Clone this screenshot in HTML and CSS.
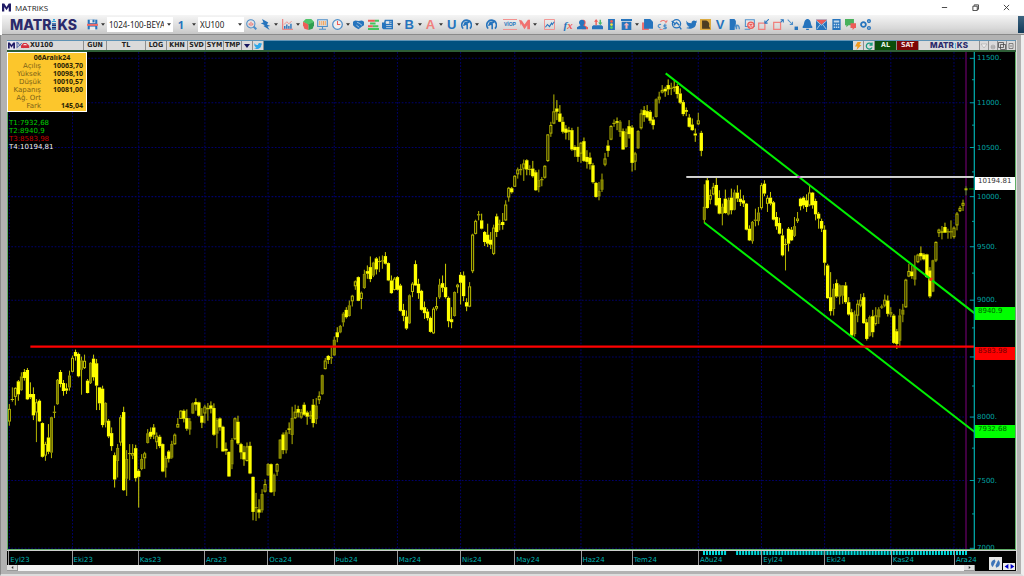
FILE: index.html
```html
<!DOCTYPE html>
<html lang="tr">
<head>
<meta charset="utf-8">
<title>MATRIKS</title>
<link rel="stylesheet" href="styles.css">
</head>
<body>
<svg class="defs" aria-hidden="true">
  <symbol id="m" viewBox="0 0 16 16"><path d="M0 15V1h4l4 6 4-6h4v14h-4V7l-4 6-4-6v8z"/></symbol>
  <symbol id="caret" viewBox="0 0 6 4"><path d="M0 0h6L3 4z"/></symbol>
  <symbol id="bird" viewBox="0 0 16 16"><path d="M0 2c2 3 4 4 8 4 0-4 4-5 6-3l2-1-1 2 1 0-1.500 2C15 12 8 16 0 13c2 0 4 0 5-2-2 0-3-1-3-2h1C1 8 0 6 1 6z"/></symbol>
  <symbol id="swirl" viewBox="0 0 16 16"><g fill="none" stroke="#2674bd" stroke-width="2.300"><path d="M3 14C-2 7 4 0 10 2c5 1 7 8 3 12M4 10c1-5 4-6 8-5M9 15V8"/></g><path d="M5 4h5v5H5z" fill="#2674bd"/></symbol>
</svg>

<header class="titlebar">
  <svg class="app-mark"><use href="#m"/></svg>
  <h1 class="app-name">MATRIKS</h1>
  <div class="window-buttons">
    <button aria-label="Simge durumuna küçült"><svg viewBox="0 0 8 8"><path d="M1 4h6"/></svg></button>
    <button aria-label="Geri yükle"><svg viewBox="0 0 8 8"><path d="M1 2.500h5v5H1zM2.500 2V1H7.500v5H6"/></svg></button>
    <button aria-label="Kapat"><svg viewBox="0 0 8 8"><path d="M1 1l6 6M7 1L1 7"/></svg></button>
  </div>
</header>

<nav class="toolbar">
  <div class="brand"><span>MATR</span><svg viewBox="0 0 4 11"><path d="M0 4h4v7H0z" fill="#2b2a6b"/><path d="M1 0h2v1.500H1zM0 2h4v1H0z" fill="#35a6dc"/><path d="M0 5h4M0 7.500h4M0 10h4" stroke="#6fbfe8"/></svg><span>KS</span></div>
  <button class="save" aria-label="Kaydet"><svg viewBox="0 0 16 16"><path d="M1 1h14v14H1z" fill="#2674bd"/><path d="M4 1h8v5H4z" fill="#ececec"/><path d="M8 1h3v4H8z" fill="#2674bd"/><path d="M0 7h16v3H0z" fill="#f26b66"/><path d="M4 11h8v5H4z" fill="#ececec"/></svg></button>
  <button class="drop" aria-label="Kaydet menüsü"><svg><use href="#caret"/></svg></button>
  <div class="combo page-combo"><select aria-label="Sayfa"><option>1024-100-BEYA</option></select><svg><use href="#caret"/></svg></div>
  <button class="one">1</button>
  <button class="drop" aria-label="Pencere menüsü"><svg><use href="#caret"/></svg></button>
  <div class="combo symbol-combo"><select aria-label="Sembol"><option>XU100</option></select><svg><use href="#caret"/></svg></div>

  <div class="tools">
    <button class="tool" aria-label="Ara"><svg viewBox="0 0 16 16"><g fill="none" stroke="#4d8ec9" stroke-width="1.500"><circle cx="7" cy="7" r="6"/><path d="M11 11l4 4" stroke-width="3"/></g><path d="M4 9V6h1.500v3zM6.500 10V4H8v6zM9 9V6h1.500v3z" fill="#f0716f"/></svg></button>
    <button class="tool" aria-label="Emir"><svg viewBox="0 0 16 16"><path d="M3 0l9 5-2 3 5 2-4 1 3 5-9-6 2-1-6-3 4-1z" fill="#2674bd"/></svg></button>
    <button class="drop" aria-label="Emir menüsü"><svg><use href="#caret"/></svg></button>
    <button class="tool" aria-label="Grafik"><svg viewBox="0 0 16 16"><path d="M1 0v15h15" stroke="#f0716f" stroke-width="1.500" fill="none"/><path d="M3 14v-4h2v4zM6 14V8h2v6zM9 14v-4h2v4zM12 14V7h2v7z" fill="#2674bd"/><path d="M3 8l4-4 3 3 4-4" stroke="#f0716f" fill="none"/></svg></button>
    <button class="drop" aria-label="Grafik menüsü"><svg><use href="#caret"/></svg></button>
    <button class="tool" aria-label="Dağılım"><svg viewBox="0 0 16 16"><path d="M0 4l4-4h8l4 4-8 5z" fill="#4fc46a"/><path d="M0 4l8 4v8l-6-2-2-5z" fill="#ee5b57"/><path d="M16 4L8 8v8l6-2 2-5z" fill="#2f9e50"/></svg></button>
    <button class="tool" aria-label="Ekran"><svg viewBox="0 0 16 16"><path d="M1 1h14v10H1zM8 11v3M3 15h10" fill="none" stroke="#4d8ec9" stroke-width="1.600"/><path d="M4 3v6M7 3v6M9.500 3v6M12 3v6" stroke="#f3a45a" stroke-width="1.500"/></svg></button>
    <button class="tool" aria-label="Saat"><svg viewBox="0 0 16 16"><circle cx="8" cy="8" r="7" fill="#eee" stroke="#4d8ec9" stroke-width="1.800"/><path d="M8 3v5h4" stroke="#ee5b57" stroke-width="1.500" fill="none"/></svg></button>
    <button class="drop" aria-label="Saat menüsü"><svg><use href="#caret"/></svg></button>
    <button class="tool" aria-label="Anlaşma"><svg viewBox="0 0 16 16"><path d="M0 4l3-2 5 1 5-1 3 2v5l-3 2-5 4-5-3-3-3z" fill="#2674bd"/><path d="M6 5l3 1 4 3M5 9l4 3" stroke="#dce8f3" fill="none"/></svg></button>
    <button class="tool" aria-label="Derinlik"><svg viewBox="0 0 16 16"><path d="M0 1h10v3H0zM0 9h7v3H0z" fill="#ee5b57"/><path d="M10 1h6v3h-6zM3 5h8v3H3zM7 9h8v3H7zM0 13h16v3H0z" fill="#45c45c"/></svg></button>
    <button class="tool" aria-label="Haberler"><svg viewBox="0 0 16 16"><path d="M4 1h12v14H2l-2-2V5h3z" fill="#2674bd"/><path d="M6 3.500h4v3H6zM11 4h3M11 6.500h3M6 9.500h8M6 12.500h8" fill="#ececec" stroke="#ececec"/></svg></button>
    <button class="drop" aria-label="Haber menüsü"><svg><use href="#caret"/></svg></button>
    <button class="tool letter blue">B</button>
    <button class="drop" aria-label="B menüsü"><svg><use href="#caret"/></svg></button>
    <button class="tool letter red">A</button>
    <button class="drop" aria-label="A menüsü"><svg><use href="#caret"/></svg></button>
    <button class="tool letter blue">U</button>
    <button class="tool" aria-label="Takas"><svg><use href="#swirl"/></svg></button>
    <button class="drop" aria-label="Takas menüsü"><svg><use href="#caret"/></svg></button>
    <i class="sep"></i>
    <button class="tool" aria-label="Analiz"><svg><use href="#swirl"/></svg></button>
    <i class="sep"></i>
    <button class="tool viop">VİOP</button>
    <button class="tool" aria-label="Matriks"><svg viewBox="0 0 16 16"><path d="M0 1l4 1 4 6 5-7h3v14h-4V9l-4 6-5-8v4z" fill="#f0716f"/></svg></button>
    <button class="drop" aria-label="Matriks menüsü"><svg><use href="#caret"/></svg></button>
    <i class="sep"></i>
    <button class="tool" aria-label="Çizgi grafik"><svg viewBox="0 0 16 16"><path d="M.700.700h14.600v14.600H.700z" fill="none" stroke="#f2918f" stroke-width="1.400"/><path d="M2 12l3-4 3 3 3-5 1 2 3-4" fill="none" stroke="#2674bd" stroke-width="1.500"/></svg></button>
    <i class="sep"></i>
    <button class="tool fx"><b>f</b>x</button>
    <button class="tool" aria-label="Kullanıcılar"><svg viewBox="0 0 16 16"><path d="M8 1c6-1 5 7 3 8l5 3v3H7z" fill="#ee5b57"/><path d="M7 1c5 0 5 6 2 8l4 3v3H0v-3l5-3C2 7 2 1 7 1z" fill="#2674bd"/></svg></button>
    <button class="tool" aria-label="Gelen"><svg viewBox="0 0 16 16"><path d="M0 11l2-2h12l2 2v4H0z" fill="#2674bd"/><path d="M5 9V4H3l3-4 3 4H7v5z" fill="#ee5b57"/><path d="M11 1v4H9l3 4 3-4h-2V1z" fill="#45b868"/></svg></button>
    <button class="tool" aria-label="Sinyal"><svg viewBox="0 0 16 16"><path d="M3 0h10v16H3z" fill="#2674bd"/><circle cx="8" cy="3.500" r="2" fill="#ee5b57"/><circle cx="8" cy="8" r="2" fill="#f5dc3c"/><circle cx="8" cy="12.500" r="2" fill="#4fd05e"/></svg></button>
    <button class="tool" aria-label="Yükle"><svg viewBox="0 0 16 16"><path d="M0 0h16v3H0zM1 4h14v12H1z" fill="#2674bd"/><path d="M6.500 14V9H4l4-4 4 4H9.500v5z" fill="#f5b3b8"/></svg></button>
    <button class="drop" aria-label="Yükle menüsü"><svg><use href="#caret"/></svg></button>
    <button class="tool" aria-label="Kopyala"><svg viewBox="0 0 16 16"><path d="M0 5h10v11H0z" fill="#ee6f6c"/><path d="M3 0h9l4 4v10H3z" fill="#2674bd"/></svg></button>
    <button class="tool" aria-label="Döviz"><svg viewBox="0 0 16 16"><g fill="none" stroke-width="1.600"><path d="M6 8C1 7 0 12 5 13" stroke="#4d8ec9"/><path d="M5 4c3-3 7-2 8 1l2-3M4 15c2 1 3 1 4 0" stroke="#ee7a76"/><path d="M14 9c-5-1-5 2-2 2.500s2 3.500-3 2.500M11.500 7v8" stroke="#4d8ec9"/></g></svg></button>
    <button class="tool" aria-label="İncele"><svg viewBox="0 0 16 16"><g fill="none" stroke="#2674bd"><circle cx="8" cy="7" r="6" stroke-width="1.800"/><path d="M12 11l3 4M1 3l5 4M4 9l4-4 4 4" stroke-width="2"/></g></svg></button>
    <button class="tool" aria-label="Twitter"><svg fill="#2674bd"><use href="#bird"/></svg></button>
    <button class="tool" aria-label="Portre"><svg viewBox="0 0 16 16"><path d="M0 0h16v16H0z" fill="#dba93f"/><path d="M3 2h6c5 2 5 6 4 8l2 4H3z" fill="#4c3d22"/></svg></button>
    <button class="tool letter blue">V</button>
    <button class="tool" aria-label="Şirket"><svg viewBox="0 0 16 16"><path d="M1 0h7l2 3v4l-2 9H1z" fill="#2674bd"/><path d="M8 15c0-8 7-8 7 0M11 15v-5" fill="none" stroke="#4d8ec9" stroke-width="2"/></svg></button>
    <button class="tool" aria-label="Ekran kapat"><svg viewBox="0 0 16 16"><path d="M2 1h13v10H2zM1 15h8" fill="none" stroke="#4d8ec9" stroke-width="1.500"/><circle cx="10" cy="9" r="4.500" fill="#f6c9c9" stroke="#ee5b57" stroke-width="1.800"/><path d="M8 7l4 4M12 7l-4 4" stroke="#ee5b57" stroke-width="1.500"/></svg></button>
    <button class="tool" aria-label="Küçült"><svg viewBox="0 0 16 16"><path d="M1 6h9v9H1z" fill="none" stroke="#f0807d" stroke-width="1.800"/><path d="M16 0l-5 5M10 2v4h4" fill="none" stroke="#2674bd" stroke-width="1.500"/></svg></button>
    <button class="tool" aria-label="Büyüt"><svg viewBox="0 0 16 16"><path d="M1 5h10v10H1z" fill="none" stroke="#f0807d" stroke-width="1.800"/><path d="M11 5l4-4M11 1h4v4" fill="none" stroke="#2674bd" stroke-width="1.500"/></svg></button>
    <button class="tool" aria-label="Taşı"><svg viewBox="0 0 16 16"><path d="M1 1l7 7M8 4v4H4" fill="none" stroke="#4d8ec9" stroke-width="1.500"/><path d="M11 11h5v5h-5z" fill="#2674bd"/></svg></button>
    <button class="tool" aria-label="Alarm"><svg viewBox="0 0 16 16"><path d="M7 0h2c5 2 3 8 6 11v2H1v-2C4 8 2 2 7 0zM6 14h4v2H6z" fill="#2674bd"/></svg></button>
    <button class="tool" aria-label="Mesaj"><svg viewBox="0 0 16 16"><path d="M0 1h16v15H0z" fill="#2674bd"/><path d="M0 1h16L8 8z" fill="#ee5b57"/><path d="M0 2l8 7 8-7M1 15l5-7M15 15l-5-7" fill="none" stroke="#dfe7ee"/></svg></button>
    <button class="tool" aria-label="Hesap makinesi"><svg viewBox="0 0 16 16"><path d="M2 0h12v16H2z" fill="#2674bd"/><path d="M4 2h8v3H4zM4 7h2v2H4zM7 7h2v2H7zM10 7h2v2h-2zM4 11h2v2H4zM7 11h2v2H7zM10 11h2v2h-2z" fill="#c3d9ec"/></svg></button>
    <button class="tool" aria-label="Sohbet"><svg viewBox="0 0 16 16"><path d="M0 0h13v9H5l-3 3V9H0z" fill="#48b15c"/><path d="M8 6h8v7h-2l-3 3v-3H8z" fill="#ee5b57"/></svg></button>
    <button class="tool" aria-label="Ayarlar"><svg viewBox="0 0 16 16"><g fill="none" stroke="#2674bd" stroke-width="2"><circle cx="5" cy="8" r="3.500" stroke-width="2.600"/><circle cx="13" cy="3" r="2"/><circle cx="13" cy="13" r="2"/></g></svg></button>
  </div>
  <span class="dock" aria-hidden="true"></span>
</nav>

<main class="frame">
  <section class="chart-window">
    <div class="chart-bar">
      <svg class="bar-mark"><use href="#m"/></svg>
      <svg class="bar-tools" viewBox="0 0 39 24"><path d="M1 4h5l4 8 6-7M3 4v14M2 18l10-8 8 8" fill="none" stroke="#4a5fa8" stroke-width="2.500"/><path d="M14 13l6-8h9l8 8v6H14z" fill="#d6303f"/><path d="M20 11l2-3h6l3 3z" fill="#f2dada"/></svg>
      <span class="cell sym">XU100</span>
      <button class="cell gun">GUN</button>
      <button class="cell tl">TL</button>
      <button class="cell w21">LOG</button>
      <button class="cell w21">KHN</button>
      <button class="cell w17">SVD</button>
      <button class="cell w17">SYM</button>
      <button class="cell w17">TMP</button>
      <button class="cell w10" aria-label="Menü"><svg class="menu-caret"><use href="#caret"/></svg></button>
      <button class="cell w10" aria-label="Paylaş"><svg class="share" fill="#2ca7e8"><use href="#bird"/></svg></button>
      <span class="grow"></span>
      <button class="cell w10" aria-label="Hızlı emir"><svg class="share" viewBox="0 0 16 16"><path d="M7 0h7l-3 6h4L5 16l2-7H2z" fill="#f09a1e"/></svg></button>
      <button class="cell w10" aria-label="Yenile"><svg class="share" viewBox="0 0 16 16"><path d="M13 4a6 6 0 1 0 1 7M9 6h5V1" fill="none" stroke="#1c9c80" stroke-width="2.600"/></svg></button>
      <button class="cell buy">AL</button>
      <button class="cell sell">SAT</button>
      <span class="cell bar-brand"><span>MATR</span><i></i><span>KS</span></span>
      <button class="cell w9" aria-label="Aşağı"><svg class="share" viewBox="0 0 16 16"><path d="M2 4h12l-6 8z" fill="#eee" stroke="#999"/></svg></button>
      <button class="cell w9" aria-label="Küçült"><svg class="share" viewBox="0 0 16 16"><circle cx="8" cy="10" r="4" fill="#ccc" stroke="#888"/><path d="M5 10h6" stroke="#666"/></svg></button>
      <button class="cell w9" aria-label="Döşe"><svg class="share" viewBox="0 0 16 16"><path d="M1 1h10v10H1zM5 5h10v10H5z" fill="none" stroke="#444" stroke-width="1.500"/></svg></button>
      <button class="cell w9" aria-label="Kapat"><svg class="share" viewBox="0 0 16 16"><path d="M4 3h8v10H4zM6 8h4" fill="none" stroke="#666" stroke-width="1.500"/></svg></button>
    </div>

    <div class="chart-body">
      <div class="plot">
        <svg id="plot" viewBox="24 156 2898 1488" preserveAspectRatio="none" role="img" aria-label="XU100 günlük mum grafiği"></svg>
        <div class="quote">
          <h2>06Aralık24</h2>
          <dl>
            <dt>Açılış</dt><dd>10063,70</dd>
            <dt>Yüksek</dt><dd>10098,10</dd>
            <dt>Düşük</dt><dd>10010,57</dd>
            <dt>Kapanış</dt><dd>10081,00</dd>
            <dt>Ağ. Ort</dt><dd></dd>
            <dt>Fark</dt><dd>145,04</dd>
          </dl>
        </div>
        <ul class="trends">
          <li class="up">T1:7932,68</li>
          <li class="up">T2:8940,9</li>
          <li class="down">T3:8583,98</li>
          <li>T4:10194,81</li>
        </ul>
      </div>
      <div class="prices" id="prices"></div>
    </div>

    <div class="date-row">
      <div class="dates">
        <svg id="events" viewBox="24 0 2898 12" preserveAspectRatio="none" aria-hidden="true"></svg>
        <div id="dates"></div>
      </div>
      <div class="corner">
        <button class="refresh" aria-label="Yenile"><svg viewBox="0 0 16 16"><path d="M7 2c-6 1-7 8-3 11l4-8zM9 14c6-1 7-8 3-11L8 11z" fill="#3f74b8"/></svg></button>
        <button class="nav" aria-label="Geri"><svg viewBox="0 0 6 8"><path d="M6 0v8L0 4z"/></svg></button>
        <button class="nav" aria-label="İleri"><svg viewBox="0 0 6 8"><path d="M0 0v8l6-4z"/></svg></button>
      </div>
      <div class="scroll">
        <button aria-label="Sola kaydır"><svg viewBox="0 0 6 8"><path d="M5 0v8L0 4z"/></svg></button>
        <span class="grow"></span>
        <button aria-label="Sağa kaydır"><svg viewBox="0 0 6 8"><path d="M1 0v8l5-4z"/></svg></button>
      </div>
    </div>
  </section>
</main>
<script src="chart.js"></script>
</body>
</html>
```

FILE: styles.css
```css
* { box-sizing: border-box; }
html, body { height: 100%; margin: 0; }
body {
  display: flex; flex-direction: column; overflow: hidden;
  background: #fff; color: #222;
  font: 7px/8px "DejaVu Sans", Verdana, sans-serif;
}
h1, h2, dl, dd, dt, ul { margin: 0; padding: 0; }
ul { list-style: none; }
button, select { margin: 0; padding: 0; border: 0; background: none; font: inherit; color: inherit; border-radius: 0; }
svg { display: block; }
.defs { width: 0; height: 0; position: absolute; }
.grow { flex: 1; }

.titlebar { display: flex; align-items: center; height: 15px; flex: none; padding-left: 2px; gap: 4px; }
.app-mark { width: 9px; height: 9px; fill: #201c66; }
.app-name { font: 400 8px/14px "Open Sans", sans-serif; color: #222; }
.window-buttons { margin-left: auto; display: flex; padding-right: 2px; }
.window-buttons button { width: 31px; height: 15px; display: grid; place-items: center; }
.window-buttons svg { width: 7px; height: 7px; fill: none; stroke: #333; }

.toolbar {
  display: flex; align-items: center; height: 20px; flex: none;
  margin-left: 2px; padding-left: 8px; position: relative;
  background: linear-gradient(#f5f5f5, #d8d8d8 70%, #c6c6c6);
  border-bottom: 1px solid #8a8a8a;
}
.brand { display: flex; align-items: center; width: 77px; color: #2b2a6b; font: 800 14px/18px Inter, sans-serif; }
.brand svg { width: 4px; height: 11px; margin: 0 1px; }
.save { width: 11px; }
.tool svg, .save svg { width: 11px; height: 11px; }
.drop { width: 9px; display: grid; place-items: center; }
.drop svg { width: 4px; height: 3px; fill: #333; }
.combo { display: flex; align-items: center; position: relative; height: 15px; background: #fff; }
.combo select { appearance: none; width: 100%; height: 15px; padding: 0 9px 0 2px; font: 8px/15px "Noto Sans", sans-serif; color: #222; }
.combo svg { position: absolute; right: 2px; width: 4px; height: 3px; fill: #333; }
.page-combo { width: 66px; }
.symbol-combo { width: 46px; }
.one { width: 16px; color: #2674bd; font: 700 11px/15px "Open Sans", sans-serif; }
.tools { display: flex; align-items: center; flex: 0 0 62%; }
.tool { flex: 15 1 0; min-width: 0; height: 16px; display: flex; align-items: center; justify-content: center; }
.tools .drop { flex: 7 1 0; min-width: 0; }
.sep { flex: 4 1 0; }
.letter { font: 700 13px/16px "Liberation Sans", sans-serif; }
.blue { color: #2674bd; }
.red { color: #f0807d; }
.viop { font: 700 5px/9px "Liberation Sans", sans-serif; color: #2674bd; height: 11px; border: solid #f2918f; border-width: 1px 0; }
.fx { font: italic 700 11px/16px "Liberation Serif", serif; color: #ee5b57; }
.fx b { color: #2674bd; }
.dock { position: absolute; right: 0; top: 1px; width: 6px; height: 17px; background: linear-gradient(#3e6480, #123b5a); }

.frame {
  flex: 1; min-height: 0; display: flex;
  padding: 5px 4px 3px 6px; background: #b2b2b2;
  border-left: 1px solid #8a8a8a; border-right: 3px solid #eee; border-bottom: 2px solid #ddd;
}
.chart-window {
  flex: 1; min-width: 0; display: flex; flex-direction: column; background: #000;
  border-right: 1px solid #ddd;
}
.chart-bar {
  display: flex; height: 12px; flex: none; background: #00507f;
  border-top: 1px solid #5f93b5; border-bottom: 2px solid #2d5e36;
}
.bar-mark { width: 9px; height: 9px; padding: 1px; background: #e6e6ee; fill: #201c66; }
.bar-tools { width: 14px; height: 9px; background: #d9d9d9; }
.cell {
  height: 9px; display: flex; align-items: center; justify-content: center;
  background: #dadada; border-right: 1px solid #8e8e8e; color: #222;
  font: 700 7px/9px "DejaVu Sans Condensed", "DejaVu Sans", sans-serif;
}
.sym { width: 54px; justify-content: flex-start; }
.gun { width: 23px; }
.tl { width: 39px; }
.w21 { width: 21px; }
.w17 { width: 18px; }
.w10 { width: 11px; }
.w9 { width: 9px; }
.menu-caret { width: 6px; height: 4px; fill: #16165e; }
.share { width: 8px; height: 8px; }
.buy { width: 22px; background: #0b4d0b; color: #e8f4e8; }
.sell { width: 22px; background: #7d0606; color: #f6e2e2; }
.bar-brand { width: 61px; color: #2b2a6b; font: 800 8px/9px Inter, sans-serif; }
.bar-brand i { width: 1px; height: 6px; margin: 0 1px; background: #58b4e4; }

.chart-body {
  flex: 1; min-height: 0; display: flex;
  border: solid #5fae66; border-width: 0 1px 1px;
}
.plot { flex: 1; min-width: 0; position: relative; }
.plot > svg { width: 100%; height: 100%; }
.quote {
  position: absolute; left: -1px; top: 0; width: 80px; padding: 1px 3px 1px 4px;
  background: #fcc62c; border: 1px solid #fff; font: 7px/8px "DejaVu Sans", sans-serif;
}
.quote h2 { font: 700 7px/8px "Noto Sans", sans-serif; padding-left: 9px; text-align: center; color: #2a2205; }
.quote dl { display: grid; grid-template-columns: 29px 1fr; grid-auto-rows: 8px; }
.quote dt { justify-self: end; color: #7c6318; }
.quote dd { text-align: right; font: 700 7px/8px "Noto Sans", sans-serif; color: #2a2205; }
.trends { position: absolute; left: 1px; top: 67px; color: #f0f0f0; }
.up { color: #00d000; }
.down { color: #c80000; }

.prices { width: 40px; position: relative; overflow: hidden; }
.price { position: absolute; left: 2px; color: #00a4a4; transform: translateY(-50%); }
.tag { position: absolute; left: 0; right: 0; height: 13px; padding-left: 3px; line-height: 9px; }
.tag-white { background: #fff; color: #333; }
.tag-green { background: #00ff00; color: #005c00; }
.tag-red { background: #ff0000; color: #6b0000; }

.date-row {
  flex: none; display: grid; grid-template: 14px 6px / 1fr 41px;
  border-top: 1px solid #cfcfcf;
}
.dates { position: relative; }
.dates > svg { width: 100%; height: 4px; }
.date { position: absolute; top: 0; bottom: 0; padding-left: 1px; padding-top: 5px; color: #00b4b4; border-left: 1px solid #999; white-space: nowrap; }
.corner { grid-row: 1 / 3; grid-column: 2; display: flex; align-items: flex-end; padding: 0 1px 1px 14px; }
.refresh { width: 13px; height: 13px; display: grid; place-items: center; background: #e6e6e6; margin-right: 1px; }
.refresh svg { width: 11px; height: 11px; }
.nav { width: 6px; height: 7px; display: grid; place-items: center; background: #eee; }
.nav svg { width: 5px; height: 5px; fill: #0000c8; }
.scroll { display: flex; background: #f4f4f4; }
.scroll button { width: 11px; height: 6px; display: grid; place-items: center; background: #e0e0e0; border: solid #999; border-width: 0 1px 1px 0; }
.scroll svg { width: 3px; height: 3px; fill: #333; }
```

FILE: chart.js
```js
// Candle rows: high, body top, body bottom, low, kind (f filled, o shaded, h hollow, d doji).
// Vertical values are in plot units, counted from the block's base.
const blocks = [
  { base: 990, rows: `220 235 272 285 h;170 205 208 213 d;170 172 198 224 h;148 152 191 210 f;125 138 178 180 o;115 124 142 150 f;112 118 206 208 f;155 190 200 205 f;170 190 254 268 f;205 215 245 334 h;206 210 272 274 f;275 277 378 380 f;333 340 374 390 h;280 320 363 370 f;258 260 365 382 o;225 243 246 262 d;145 148 220 222 o;118 124 160 170 f;148 157 181 195 f;158 173 180 190 f;120 135 170 180 o;75 82 123 125 h;57 64 77 90 f;66 70 137 140 f;78 90 117 192 o;72 91 112 115 h;145 150 187 188 f;95 97 157 160 o;72 84 140 150 f;85 98 165 238 f;170 170 218 238 f;165 174 283 290 f;215 217 275 290 o;265 270 317 322 f;290 307 346 360 f;365 373 446 470 f;340 352 390 440 o;253 260 335 345 h;228 244 478 480 f;358 385 443 495 o;340 367 370 448 d;340 367 374 385 h;342 352 442 452 f;415 420 438 530 f;370 385 414 418 o;363 368 382 414 h;295 308 336 338 o;290 303 318 325 f;280 290 312 325 f;305 315 334 355 h;312 318 346 352 f;338 340 422 424 f;375 382 410 440 o;358 362 384 395 f;330 340 380 384 o;308 312 340 342 h;262 280 290 290 h;238 240 264 265 h;236 240 264 275 f;236 262 294 300 f;262 272 296 312 o;215 218 248 250 o;203 214 222 240 f;213 215 255 258 f;232 255 276 292 f;222 228 248 278 h;217 232 236 270 d;212 224 234 248 f;218 232 312 315 f;262 268 308 352 o;260 263 290 300 f;285 288 362 363 f;335 354 360 372 f;362 363 437 438 f;322 328 400 415 o;260 263 325 328 h;255 273 338 342 f;336 340 365 385 f;345 364 386 405 f;335 347 390 392 h;333 345 428 430 f;437 438 543 568 f;486 529 532 570 d;505 535 545 562 f;475 490 538 545 o;445 460 482 485 h` },
  { base: 690, rows: `697 700 733 735 o;698 700 784 786 f;728 732 782 795 o;697 700 722 735 h;625 627 683 684 o;605 611 658 670 f;598 605 658 668 o;575 593 597 610 f;528 562 612 640 o;522 543 562 565 h;525 535 546 560 f;535 545 560 564 h;515 522 552 555 f;540 545 558 582 f;540 554 557 565 d;505 522 577 590 f;502 525 565 580 o;482 496 508 520 h;432 434 490 492 o;382 390 415 416 h;373 376 388 400 f;350 380 383 400 d;318 328 374 376 o;290 305 320 335 f;283 287 305 308 o;245 250 275 288 o;230 238 260 264 f;210 225 256 258 o;193 196 212 228 h;150 153 167 178 h;138 140 211 212 f;183 187 205 236 h;118 131 172 175 o;105 122 130 145 f;78 110 146 155 f;94 97 135 140 o;80 84 117 132 f;78 92 95 125 d;75 90 93 115 d;65 77 100 102 f;96 98 150 152 f;135 150 188 190 f;140 145 178 180 h;137 140 178 180 f;160 165 241 243 f;220 238 256 272 f;240 258 294 298 f;192 195 278 280 o;155 160 184 200 h;90 101 165 166 f;145 160 188 205 f;178 181 238 240 f;213 230 248 265 f;235 243 263 270 f;258 262 304 306 f;230 235 308 310 h;200 227 234 240 h;145 163 200 205 o;135 158 172 185 f;100 170 200 204 f;198 202 272 290 f;230 266 275 293 f;183 185 256 258 o;160 163 170 188 h;125 133 157 222 f;123 135 197 212 f;203 215 228 242 f;155 168 228 230 h;10 13 122 128 h;-32 -28 10 12 h;-58 -48 -45 -30 d` },
  { base: 180, rows: `460 480 505 507 f;512 515 545 557 f;490 523 550 560 f;515 538 553 566 f;493 502 580 584 h;460 468 515 530 f;478 490 493 510 d;458 485 494 508 f;420 433 480 482 h;380 383 411 424 h;380 384 396 400 f;345 347 379 380 h;322 328 342 355 h;312 327 330 345 d;298 310 325 362 h;297 300 328 345 f;315 326 329 345 d;302 325 348 352 f;330 336 390 392 f;328 360 380 396 o;350 357 360 378 d;315 317 352 355 h;222 223 302 305 h;185 195 220 230 h;103 154 190 192 h;120 145 155 180 f;135 160 185 186 f;170 185 215 220 f;195 205 218 238 f;200 210 215 240 f;203 210 268 272 f;255 260 270 290 f;200 260 290 305 f;245 248 280 308 h;232 243 302 305 f;270 290 305 325 f;277 292 312 328 f;308 315 366 370 f;365 368 410 412 f;365 392 408 420 o;340 358 388 395 o;278 295 313 318 h;240 256 272 290 f;195 198 238 240 h;178 188 191 200 d;172 183 188 210 f;180 185 215 230 o;205 213 268 269 f;205 215 260 262 o;180 198 222 235 f;195 202 308 334 f;275 280 304 330 h;210 213 264 266 o;148 160 204 208 h;138 150 165 185 f;135 153 172 175 f;150 155 182 190 f;170 178 195 208 f;115 118 170 172 o;95 110 118 130 h;75 90 97 100 h;80 86 94 110 f;58 75 88 105 f;68 83 86 105 d;60 80 82 95 f;72 78 102 115 f;85 100 128 132 f;120 126 162 168 f;142 150 155 168 f;162 172 200 202 f;175 193 210 212 f;205 220 226 245 f;158 181 192 195 h;212 218 272 288 f` },
  { base: 480, rows: `72 140 178 188 o;52 60 143 145 f;88 105 118 132 h;68 80 102 105 h;52 74 135 138 f;90 113 160 162 f;130 140 160 195 o;88 115 158 160 f;112 120 162 165 o;85 112 150 162 f;88 97 148 150 o;75 97 115 125 f;88 115 125 137 f;105 120 130 140 f;128 130 208 210 f;195 205 240 242 f;182 185 242 250 o;145 178 181 198 d;140 157 182 195 o;68 75 143 148 h;60 70 100 108 f;105 113 130 155 h;95 112 130 135 f;122 126 178 180 f;155 170 198 208 f;172 188 220 222 f;205 225 285 288 f;235 251 254 330 d;200 205 250 273 f;200 208 240 242 f;170 198 226 230 o;155 175 182 188 h;112 115 138 150 f;108 112 135 145 f;102 120 140 155 f;75 97 135 138 h;95 97 135 145 f;115 122 162 180 f;155 160 175 205 f;175 182 205 215 f;195 208 307 345 f;310 315 413 415 f;335 410 452 465 f;370 385 445 465 o;357 368 408 412 f;372 375 408 432 o;375 375 405 430 o;365 375 425 430 f;410 425 462 465 f;445 455 525 530 f;450 462 520 528 o;418 430 465 485 h;400 418 435 440 h;398 410 488 490 f;475 485 535 540 f;465 470 525 528 o;448 467 515 530 f;440 465 490 495 h;440 447 470 490 o;432 438 441 445 d;402 418 435 440 h;405 420 460 468 f;440 455 462 470 o;460 465 547 550 f;505 512 550 565 f;445 465 540 560 o;430 448 462 485 o;355 358 440 442 h;310 332 348 350 h;315 333 347 355 f;285 320 357 375 o;280 283 305 308 h;258 278 288 300 f;278 282 297 300 f;280 282 350 352 f;320 330 408 413 f;298 300 393 395 o;243 245 300 305 h;205 208 218 230 h;197 213 217 237 h;187 200 217 218 f;205 213 216 235 d;180 213 216 235 d;198 202 230 235 h;155 160 195 210 h;137 143 152 155 h;118 128 136 152 h` },
];

const LEFT = 24, TOP = 156, WIDTH = 2898, HEIGHT = 1488;
const FIRST = 28, STEP = 9.016;
const months = [
  ["Eyl23", 0], ["Eki23", 21], ["Kas23", 43], ["Ara23", 65], ["Oca24", 86], ["Þub24", 108],
  ["Mar24", 129], ["Nis24", 150], ["May24", 168], ["Haz24", 190], ["Tem24", 207], ["Aðu24", 229],
  ["Eyl24", 250], ["Eki24", 271], ["Kas24", 293], ["Ara24", 314],
];
const levels = [
  ["11500.", 175], ["11000.", 308], ["10500.", 442], ["10000.", 589], ["9500.", 739],
  ["9000.", 899], ["8500.", 1069], ["8000.", 1249], ["7500.", 1439], ["7000.", 1642],
];
const minorTicks = [239, 375, 515, 663, 818, 982, 1156, 1342, 1539];
const tags = [["10194.81", 530, "white"], ["8940.9", 918, "green"], ["8583.98", 1039, "red"], ["7932.68", 1272, "green"]];

const x = i => FIRST + i * STEP;
const rect = (cx, y, w, h, fill) => `<rect x="${cx - w / 2}" y="${y}" width="${w}" height="${h}" fill="${fill}"/>`;
const line = (x1, y1, x2, y2, stroke, width, extra = "") =>
  `<line x1="${x1}" y1="${y1}" x2="${x2}" y2="${y2}" stroke="${stroke}" stroke-width="${width}" ${extra}/>`;

let out = "";
for (const [, y] of levels) out += line(LEFT, y, 2922, y, "#00006c", 3, 'stroke-dasharray="5 5"');
for (const [, i] of months) out += line(x(i), TOP, x(i), 1644, "#00006c", 3, 'stroke-dasharray="5 5"');
out += line(2895, TOP, 2895, 1644, "#400040", 6);

let index = 0;
for (const { base, rows } of blocks) {
  for (const row of rows.split(";")) {
    const [high, top, bottom, low, kind] = row.split(" ").map((v, n) => (n < 4 ? base + Number(v) : v));
    const cx = x(index++);
    const body = Math.max(bottom - top, 3);
    const wick = kind === "f" ? "#d0d000" : "#b4b400";
    out += rect(cx, high, 3, top - high, wick) + rect(cx, bottom, 3, low - bottom, wick);
    if (kind === "f") out += rect(cx, top, 10, body, "#ffff00");
    else if (kind === "d") out += rect(cx, top, 10, body, "#d0d000");
    else out += `<rect x="${cx - 3}" y="${top + 1}" width="6" height="${Math.max(body - 2, 1)}" fill="${kind === "o" ? "#707000" : "#000"}" stroke="${kind === "o" ? "#989800" : "#c0c000"}" stroke-width="3"/>`;
  }
}
out += rect(2895, 558, 3, 27, "#3c8c1e") + rect(2895, 564, 9, 6, "#b4b400") + line(2904, 566, 2922, 566, "#008c00", 3);
out += line(1995, 220, 2923, 940, "#00f000", 6) + line(2111, 667, 2923, 1295, "#00f000", 6);
out += line(91, 1038, 2923, 1038, "#ff0000", 7);
out += line(2057, 530, 2923, 530, "#b8b8b8", 6) + line(2057, 530, 2923, 530, "#fff", 2);
out += rect(2790, 832, 9, 9, "#ff3010") + rect(2394, 527, 9, 6, "#d040d0");
for (const [, y] of levels) out += line(2907, y, 2922, y, "#00a0a0", 3);
for (const y of minorTicks) out += line(2913, y, 2922, y, "#00a0a0", 3);
out += line(2920, TOP, 2920, 1644, "#00a0a0", 4);
document.getElementById("plot").innerHTML = out;

const percent = y => `${((y - TOP) / HEIGHT) * 100}%`;
document.getElementById("prices").innerHTML =
  levels.map(([label, y]) => `<span class="price" style="top:${percent(y)}">${label}</span>`).join("") +
  tags.map(([label, y, tone]) => `<span class="tag tag-${tone}" style="top:${percent(y)}">${label}</span>`).join("");

document.getElementById("dates").innerHTML = months
  .map(([label, i]) => `<span class="date" style="left:${((x(i) - LEFT) / WIDTH) * 100}%">${label}</span>`).join("");

let marks = "";
for (let i = 231; i < 319; i++) if (i < 239 || i > 241) marks += rect(x(i), 0, 6, 12, "#00dcdc");
document.getElementById("events").innerHTML = marks;
```
